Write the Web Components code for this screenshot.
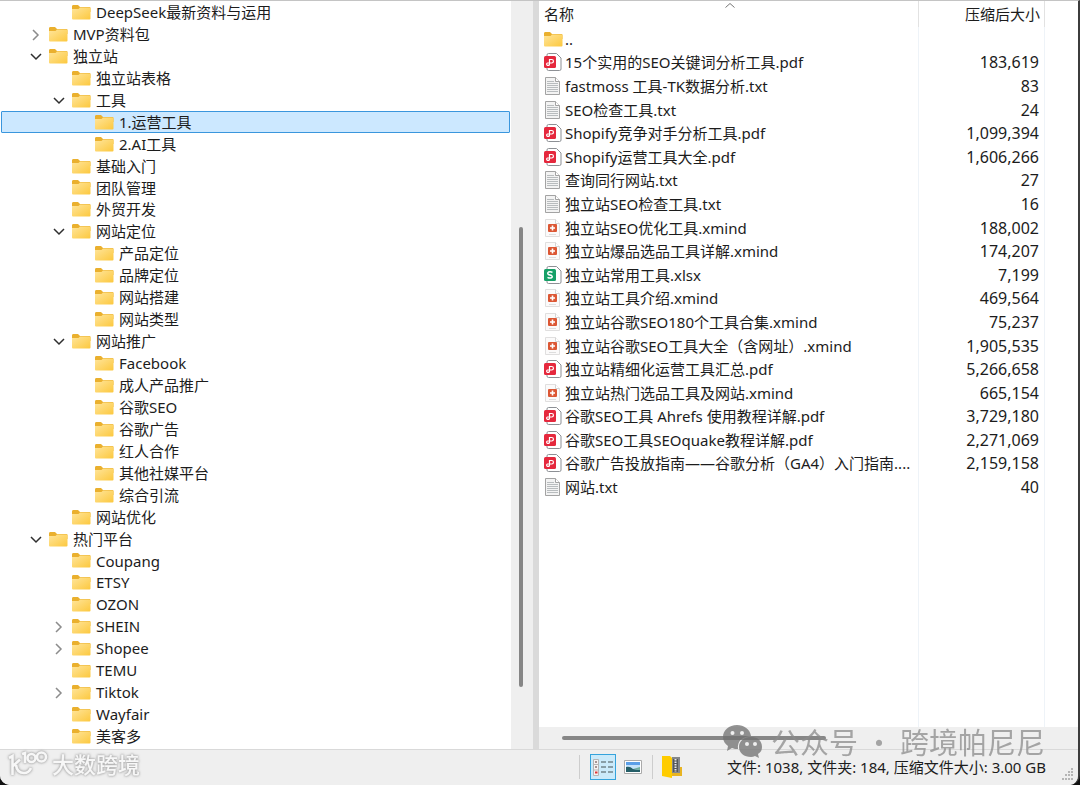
<!DOCTYPE html>
<html lang="zh-CN">
<head>
<meta charset="utf-8">
<title>压缩文件管理器</title>
<style>
  html, body { margin: 0; height: 100%; background: #111; }
  body { font: 15px/20px "Noto Sans", "Noto Sans CJK SC", sans-serif; color: #1c1c1c; }
</style>
</head>
<body>
<archive-window>
  <folder-tree slot="tree"></folder-tree>
  <file-list slot="files"></file-list>
  <status-bar slot="status">文件: 1038, 文件夹: 184, 压缩文件大小: 3.00 GB</status-bar>
  <account-mark slot="mark">公众号 · 跨境帕尼尼</account-mark>
</archive-window>

<script>
class BaseElement extends HTMLElement {
  connectedCallback() {
    if (this.shadowRoot) return;
    this.attachShadow({ mode: "open" }).innerHTML = this.render();
  }
}

/* Window frame: two panes with a splitter, status bar below */
customElements.define("archive-window", class extends BaseElement {
  render() {
    return `<style>
      :host { display: grid; grid-template-rows: minmax(0, 1fr) auto; height: 100vh; box-sizing: border-box;
        position: relative; overflow: hidden; background: #efefef; border-top: 1px solid #c4c4c4;
        border-right: 2px solid #3c3c3c; border-radius: 0 0 10px 10px; }
      main { display: grid; grid-template-columns: minmax(0, 533fr) 6px minmax(0, 539fr); min-height: 0; }
      .split { background: #dadada; }
    </style>
    <main><slot name="tree"></slot><div class="split"></div><slot name="files"></slot></main>
    <slot name="status"></slot><slot name="mark"></slot>`;
  }
});

customElements.define("file-icon", class extends BaseElement {
  render() {
    const page = `<path d="M4.500.500h8l4.500 4.500v11a1.500 1.500 0 0 1-1.500 1.500h-11a1.500 1.500 0 0 1-1.500-1.500v-14a1.500 1.500 0 0 1 1.500-1.500z" fill="#fff" stroke="#8d9095"/>`;
    const art = {
      folder: `<defs><linearGradient id="g" x1="0" y1="0" x2="1" y2="1"><stop offset="0" stop-color="#ffe59b"/><stop offset="1" stop-color="#fcc83e"/></linearGradient></defs>
        <path d="M0 3.500q0-1.500 1-1.500h5l2 2h9.500q1 0 1 1v4h-18.500z" fill="#eab02e"/>
        <path d="M0 6h6.500l1.500-1.500h9.500q1 0 1 1v10q0 1-1 1h-16.500q-1 0-1-1z" fill="url(#g)"/>`,
      txt: `<path d="M1.500.500h10l4 4v13h-14z" fill="#f3f3f3" stroke="#a3a3a3"/><path d="M11.500.500v4h4" fill="#fff" stroke="#a3a3a3"/>
        <path d="M3 4.500h7M3 6.500h11M3 8.500h11M3 10.500h11M3 12.500h11M3 14.500h11" stroke="#b8bcbe"/>`,
      pdf: page + `<rect x="0" y="3" width="12" height="12" rx="1.500" fill="#e5283d"/>
        <path d="M5.500 10.500v-4h2.200a1.700 1.700 0 0 1 0 3.500h-4.200a1.200 1.200 0 0 0 0 2.300h.800q1.200 0 1.200-1.300z" fill="none" stroke="#fff" stroke-width="1.200"/>`,
      xlsx: page + `<rect x="0" y="3" width="12" height="12" rx="1.500" fill="#16a067"/>
        <path d="M8.500 6.300q-2-1-4-.300q-1.500 1 0 2.500l3 1q1.500 1.500 0 2.300q-2 .700-4-.500" fill="none" stroke="#fff" stroke-width="1.500"/>`,
      xmind: `<path d="M1.500.500h10l4 4v13h-14z" fill="#fbfafa" stroke="#e0dfdf"/><path d="M11.500.500v4h4" fill="#fff" stroke="#d5d5d5"/>
        <rect x="4" y="5" width="9" height="8" rx="1" fill="#dc5734"/><path d="M6 9h5M8.500 6.500v5" stroke="#fff" stroke-width="1.600"/><path d="M5 15.500h7" stroke="#ddd"/>`
    };
    return `<style>:host { display: block; width: 19px; height: 18px; flex: none; } svg { display: block; }</style>
      <svg width="19" height="18" viewBox="0 0 19 18" aria-hidden="true">${art[this.getAttribute("kind")]}</svg>`;
  }
});

customElements.define("scroll-thumb", class extends BaseElement {
  render() {
    return `<style>:host { display: block; background: #868686; border-radius: 3px; }</style>`;
  }
});

/* One row of the tree. level = indent depth, state = open | closed | none */
customElements.define("tree-row", class extends BaseElement {
  render() {
    const state = this.getAttribute("state");
    const arrow = state === "open"
      ? `<path d="M1 4l5 5 5-5" stroke="#2f2f2f"/>`
      : state === "closed" ? `<path d="M3 2l5 5-5 5" stroke="#8c8c8c"/>` : "";
    return `<style>
      :host { display: flex; align-items: center; height: 100%; box-sizing: border-box; margin: 0 1px;
        border: 1px solid transparent; padding-left: calc(5px + 23px * var(--level)); white-space: nowrap; }
      :host([selected]) { background: #cce8ff; border-color: #3a96dd; border-radius: 1px; }
      .arrow { width: 12px; height: 12px; margin-right: 7px; flex: none; overflow: visible; }
      file-icon { margin-right: 5px; }
      .arrow path { fill: none; stroke-width: 1.500; }
    </style>
    <svg class="arrow" viewBox="0 0 12 12" aria-hidden="true">${arrow}</svg><file-icon kind="folder"></file-icon><span><slot></slot></span>`;
  }
});

const TREE = [
  [2, "", "DeepSeek最新资料与运用"], [1, "closed", "MVP资料包"], [1, "open", "独立站"],
  [2, "", "独立站表格"], [2, "open", "工具"], [3, "", "1.运营工具", true], [3, "", "2.AI工具"],
  [2, "", "基础入门"], [2, "", "团队管理"], [2, "", "外贸开发"], [2, "open", "网站定位"],
  [3, "", "产品定位"], [3, "", "品牌定位"], [3, "", "网站搭建"], [3, "", "网站类型"],
  [2, "open", "网站推广"], [3, "", "Facebook"], [3, "", "成人产品推广"], [3, "", "谷歌SEO"],
  [3, "", "谷歌广告"], [3, "", "红人合作"], [3, "", "其他社媒平台"], [3, "", "综合引流"],
  [2, "", "网站优化"], [1, "open", "热门平台"], [2, "", "Coupang"], [2, "", "ETSY"], [2, "", "OZON"],
  [2, "closed", "SHEIN"], [2, "closed", "Shopee"], [2, "", "TEMU"], [2, "closed", "Tiktok"],
  [2, "", "Wayfair"], [2, "", "美客多"]
];

customElements.define("folder-tree", class extends BaseElement {
  render() {
    const rows = TREE.map(([level, state, name, selected]) =>
      `<li role="treeitem" aria-level="${level}"><tree-row style="--level:${level}" state="${state}" ${selected ? "selected" : ""}>${name}</tree-row></li>`).join("");
    return `<style>
      :host { display: grid; grid-template-columns: minmax(0, 1fr) 22px; background: #fff; min-height: 0; }
      ul { list-style: none; margin: 0; padding: 0 0 2px; display: grid; grid-auto-rows: minmax(0, 1fr); min-height: 0; }
      li { min-height: 0; }
      .track { background: #efefef; display: grid; grid-template-rows: 226fr 460fr 62fr; justify-content: center; padding-right: 2px; }
      scroll-thumb { grid-row: 2; width: 4px; }
    </style>
    <ul role="tree">${rows}</ul><div class="track"><scroll-thumb></scroll-thumb></div>`;
  }
});

const FILES = [
  ["folder", "..", ""],
  ["pdf", "15个实用的SEO关键词分析工具.pdf", "183,619"],
  ["txt", "fastmoss 工具-TK数据分析.txt", "83"],
  ["txt", "SEO检查工具.txt", "24"],
  ["pdf", "Shopify竞争对手分析工具.pdf", "1,099,394"],
  ["pdf", "Shopify运营工具大全.pdf", "1,606,266"],
  ["txt", "查询同行网站.txt", "27"],
  ["txt", "独立站SEO检查工具.txt", "16"],
  ["xmind", "独立站SEO优化工具.xmind", "188,002"],
  ["xmind", "独立站爆品选品工具详解.xmind", "174,207"],
  ["xlsx", "独立站常用工具.xlsx", "7,199"],
  ["xmind", "独立站工具介绍.xmind", "469,564"],
  ["xmind", "独立站谷歌SEO180个工具合集.xmind", "75,237"],
  ["xmind", "独立站谷歌SEO工具大全（含网址）.xmind", "1,905,535"],
  ["pdf", "独立站精细化运营工具汇总.pdf", "5,266,658"],
  ["xmind", "独立站热门选品工具及网站.xmind", "665,154"],
  ["pdf", "谷歌SEO工具 Ahrefs 使用教程详解.pdf", "3,729,180"],
  ["pdf", "谷歌SEO工具SEOquake教程详解.pdf", "2,271,069"],
  ["pdf", "谷歌广告投放指南——谷歌分析（GA4）入门指南....", "2,159,158"],
  ["txt", "网站.txt", "40"]
];

customElements.define("file-list", class extends BaseElement {
  render() {
    const rows = FILES.map(([kind, name, size]) =>
      `<tr><td><div class="name"><file-icon kind="${kind}"></file-icon><span>${name}</span></div></td><td class="size">${size}</td><td></td></tr>`).join("");
    return `<style>
      :host { display: flex; flex-direction: column; background: #fff; min-height: 0; min-width: 0; }
      table { width: 100%; height: 498px; border-collapse: separate; border-spacing: 0; table-layout: fixed; }
      th, td { padding: 0; font-weight: 400; text-align: left; border-right: 1px solid #eef3f8; box-sizing: border-box; }
      th { height: 26px; border-color: #e2e2e2; position: relative; }
      th:first-child { padding-left: 5px; }
      th:last-child, td:last-child { border-right: 0; }
      .sort { position: absolute; left: 49%; top: 2px; width: 10px; height: 5px; }
      .name { display: flex; align-items: center; gap: 2px; padding-left: 5px; height: 18px; white-space: nowrap; }
      .size { font-size: 16px; line-height: 18px; text-align: right; padding-right: 5px; }
      th.right { text-align: right; padding-right: 4px; }
      .fill { flex: 1; display: grid; grid-template-columns: 380px 126px 1fr; min-height: 0; }
      .fill i { border-right: 1px solid #eef3f8; }
      .fill i:last-child { border: 0; }
      .track { height: 22px; background: #efefef; display: grid; grid-template-columns: 23fr 264fr 252fr; align-items: center; }
      scroll-thumb { grid-column: 2; height: 4px; }
    </style>
    <table>
      <colgroup><col style="width:380px"><col style="width:126px"><col></colgroup>
      <thead><tr><th>名称<svg class="sort" viewBox="0 0 10 5" aria-hidden="true"><path d="M.5 4.500L5 .500l4.500 4" fill="none" stroke="#777"/></svg></th><th class="right">压缩后大小</th><th></th></tr></thead>
      <tbody>${rows}</tbody>
    </table>
    <div class="fill"><i></i><i></i><i></i></div>
    <div class="track"><scroll-thumb></scroll-thumb></div>`;
  }
});

/* Site logo at the left end of the status bar */
customElements.define("brand-mark", class extends BaseElement {
  render() {
    return `<style>
      :host { display: flex; align-items: center; gap: 4px; color: #f7f7f7; font-size: 22px; line-height: 28px; font-weight: 500;
        filter: drop-shadow(0 0 1px #aaa) drop-shadow(0 0 1px #bbb); }
    </style>
    <svg width="40" height="28" viewBox="0 0 40 28" fill="none" stroke="#f7f7f7" stroke-width="2.600" aria-hidden="true">
      <path d="M1 8l3.500-2v19M5 16l7-6.500M8 15q1 8 8 8q5 0 7-5"/><path d="M14 4l3-1v10"/><circle cx="23.500" cy="8" r="4"/><circle cx="33.500" cy="7" r="4.500"/>
    </svg><span><slot></slot></span>`;
  }
});

customElements.define("status-bar", class extends BaseElement {
  render() {
    return `<style>
      :host { display: flex; align-items: center; height: 36px; box-sizing: border-box; border-top: 1px solid #d9d9d9; background: #efefef; padding: 0 0 2px 8px; position: relative; }
      brand-mark { flex: 1; align-self: flex-start; }
      .sep { width: 1px; height: 24px; background: #cdcdcd; }
      button { border: 1px solid transparent; background: none; padding: 0; width: 26px; height: 26px; display: grid; place-items: center; box-sizing: border-box; }
      button.on { background: #cbeafa; border-color: #35a3dc; margin: 0 4px 0 10px; }
      .zip { margin: 0 0 0 6px; }
      .thumb { margin-right: 6px; }
      .info { margin: 0 32px 0 42px; white-space: nowrap; }
      .grip { position: absolute; right: 4px; bottom: 4px; }
    </style>
    <brand-mark>大数跨境</brand-mark>
    <div class="sep"></div>
    <button class="on" aria-label="详细信息"><svg width="22" height="20" viewBox="0 0 22 20"><path d="M1.500 2.500h5v16h-5zM1.500 7.500h5M1.500 13h5" fill="#f6f2f2" stroke="#b5b5b5"/><path d="M3 5h2M3 10h2" stroke="#8a7474" stroke-width="1.500"/><path d="M3 15.500h2.500" stroke="#d33" stroke-width="2"/><path d="M9 5h5M16 5h5M9 10h5M16 10h5M9 15h5M16 15h5" stroke="#73858c" stroke-width="1.300"/></svg></button>
    <button class="thumb" aria-label="缩略图"><svg width="18" height="14" viewBox="0 0 18 14"><path d="M.5.500h17v13h-17z" fill="#fff" stroke="#aaa"/><path d="M2 2h14v10h-14z" fill="#c4e2fa"/><path d="M2 2h14v3h-14z" fill="#5b9fe8"/><path d="M2 7q4-1 7 2l7 1v2h-14z" fill="#255f68"/><path d="M9 9l7-2v3z" fill="#6fae9c"/></svg></button>
    <div class="sep"></div>
    <button class="zip" aria-label="压缩包"><svg width="22" height="24" viewBox="0 0 22 24"><path d="M9 3h10v9h2v9h-12z" fill="#e8b422"/><path d="M11 2h8v16h-8z" fill="#85888b"/><path d="M14.500 4v13" stroke="#55585b" stroke-width="5"/><path d="M14.500 4v13" stroke="#e8e8e8" stroke-width="2" stroke-dasharray="1.500 1"/><path d="M1 1h8l2 2v20l-10-2z" fill="#fc0"/></svg></button>
    <span class="info"><slot></slot></span>
    <svg class="grip" width="13" height="13" viewBox="0 0 13 13" fill="#b5b5b5" aria-hidden="true"><path d="M10 0h2v2h-2zM7 3h2v2h-2zM10 3h2v2h-2zM4 6h2v2h-2zM7 6h2v2h-2zM10 6h2v2h-2zM1 10h2v2h-2zM4 10h2v2h-2zM7 10h2v2h-2zM10 10h2v2h-2z"/></svg>`;
  }
});

/* Translucent account name that floats above the lower right corner */
customElements.define("account-mark", class extends BaseElement {
  render() {
    return `<style>
      :host { position: absolute; right: 33px; bottom: 26px; display: flex; align-items: center; gap: 8px; color: #8c8c8c; opacity: .75;
        font-family: "Noto Sans CJK SC", sans-serif; font-size: 29px; line-height: 36px; white-space: nowrap; pointer-events: none; }
    </style>
    <svg width="40" height="34" viewBox="0 0 40 34" aria-hidden="true">
      <path fill="#707070" fill-rule="evenodd" d="M14 1C6 1 0 6 0 13c0 4 2 7 5 9l-1 5 5-3c2 1 4 1 6 1-1-8 5-13 13-13C27 5 21 1 14 1zM9.500 7a2 2 0 1 1 0 4 2 2 0 0 1 0-4zM19 7a2 2 0 1 1 0 4 2 2 0 0 1 0-4z"/>
      <path fill="#707070" fill-rule="evenodd" d="M28 13c-7 0-12 4-12 10s5 10 12 10q2 0 4-1l4 2-1-4c3-2 4-4 4-7 0-6-4-10-11-10zM24 18a2 2 0 1 1 0 4 2 2 0 0 1 0-4zM32 18a2 2 0 1 1 0 4 2 2 0 0 1 0-4z"/>
    </svg><span><slot></slot></span>`;
  }
});
</script>
</body>
</html>
